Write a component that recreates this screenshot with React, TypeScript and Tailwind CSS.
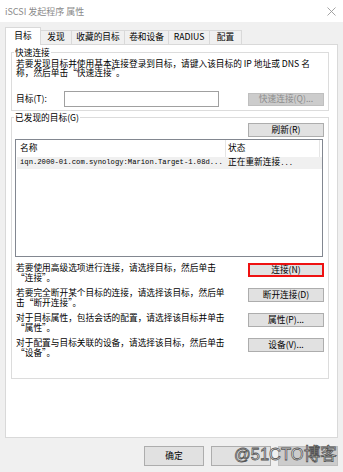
import React from "react";

const tabs = [
  { label: "目标", w: "w-[36px]", active: true },
  { label: "发现", w: "w-[31px]" },
  { label: "收藏的目标", w: "w-[53px]" },
  { label: "卷和设备", w: "w-[44px]" },
  { label: "RADIUS", w: "w-[41px]" },
  { label: "配置", w: "w-[32px]" },
];

const actions = [
  {
    lines: ["若要使用高级选项进行连接，请选择目标，然后单击", "“连接”。"],
    button: "连接(N)",
    highlight: true,
  },
  {
    lines: ["若要完全断开某个目标的连接，请选择该目标，然后单", "击“断开连接”。"],
    button: "断开连接(D)",
  },
  {
    lines: ["对于目标属性，包括会话的配置，请选择该目标并单击", "“属性”。"],
    button: "属性(P)...",
  },
  {
    lines: ["对于配置与目标关联的设备，请选择该目标，然后单击", "“设备”。"],
    button: "设备(V)...",
  },
];

function Btn({
  children,
  className = "",
}: {
  children?: React.ReactNode;
  className?: string;
}) {
  return (
    <div
      className={`flex items-center justify-center border border-[#adadad] bg-[#e1e1e1] text-[8.7px] leading-none text-black ${className}`}
    >
      {children}
    </div>
  );
}

export default function App(): React.ReactElement {
  return (
    <div
      lang="zh-CN"
      className="relative flex h-[472px] w-[343px] flex-col overflow-hidden bg-[#f0f0f0] font-['Noto_Sans_CJK_SC',sans-serif] text-black"
    >
      {/* Title bar */}
      <div className="flex h-[22px] items-center justify-between bg-white pl-[5px] pr-[7px]">
        <span className="text-[9px] leading-none text-[#8a8a8a]">
          iSCSI 发起程序 属性
        </span>
        <svg width="9" height="9" viewBox="0 0 9 9">
          <path d="M0.5 0.5 L8.5 8.5 M8.5 0.5 L0.5 8.5" stroke="#9a9a9a" strokeWidth="0.9" />
        </svg>
      </div>

      {/* Tabs */}
      <div className="mt-[5px] flex h-[17px] items-end px-[5px]">
        {tabs.map((t) =>
          t.active ? (
            <div
              key={t.label}
              className={`relative z-10 -mb-px flex h-[18px] ${t.w} items-start justify-center border-x border-t border-[#d9d9d9] bg-white pt-[2px] text-[8.7px] leading-[12px]`}
            >
              {t.label}
            </div>
          ) : (
            <div
              key={t.label}
              className={`flex h-[14px] ${t.w} items-center justify-center border-r border-t border-[#d9d9d9] bg-[#f0f0f0] text-[8.7px] leading-none`}
            >
              {t.label}
            </div>
          ),
        )}
      </div>

      {/* Tab page */}
      <div className="mx-[5px] flex h-[394px] w-[333px] flex-col border border-[#d9d9d9] bg-white">
        {/* Quick connect */}
        <div className="relative ml-[5px] mt-[7px] h-[59px] w-[318px] border border-[#dcdcdc]">
          <span className="absolute -top-[5px] left-[2px] bg-white px-[1px] text-[8.7px] leading-[9px]">
            快速连接
          </span>
          <p className="whitespace-nowrap pl-[4px] pt-[6px] text-[8.7px] leading-[9px]">
            若要发现目标并使用基本连接登录到目标，请键入该目标的 IP 地址或 DNS 名
            <br />
            称，然后单击“快速连接”。
          </p>
          <div className="mt-[14px] flex h-[16px] items-center pl-[4px]">
            <span className="w-[48px] text-[8.7px] leading-none">目标(T):</span>
            <div className="h-[16px] w-[155px] border border-[#a0a0a0] bg-white" />
            <div className="ml-[29px] flex h-[13px] w-[76px] items-center justify-center border border-[#bfbfbf] bg-[#cccccc] text-[8.7px] leading-none text-[#8c8c8c]">
              快速连接(Q)...
            </div>
          </div>
        </div>

        {/* Discovered targets */}
        <div className="relative ml-[5px] mt-[6px] h-[262px] w-[318px] border border-[#dcdcdc]">
          <span className="absolute -top-[5px] left-[2px] bg-white px-[1px] text-[8.7px] leading-[9px]">
            已发现的目标(G)
          </span>
          <div className="flex justify-end pr-[4px] pt-[5px]">
            <Btn className="h-[14px] w-[76px]">刷新(R)</Btn>
          </div>

          <div className="ml-[3px] mt-[2px] h-[118px] w-[308px] border border-[#828790] bg-white">
            <div className="flex h-[17px] items-center text-[8.7px] leading-none">
              <div className="flex h-full w-[210px] items-center border-r border-[#e5e5e5] pl-[4px]">
                名称
              </div>
              <div className="flex h-full w-[94px] items-center border-r border-[#e5e5e5] pl-[2px]">
                状态
              </div>
            </div>
            <div className="ml-[1px] flex h-[12px] items-center bg-[#f0f0f0]">
              <span className="w-[209px] whitespace-nowrap pl-[3px] font-['Liberation_Mono',monospace] text-[7.2px] leading-none">
                iqn.2000-01.com.synology:Marion.Target-1.08d...
              </span>
              <span className="whitespace-nowrap pl-[2px] text-[8.7px] leading-none">
                正在重新连接
                <span className="font-['Liberation_Mono',monospace] text-[7.2px]">...</span>
              </span>
            </div>
          </div>

          <div className="mt-[6px] flex flex-col">
            {actions.map((a) => (
              <div key={a.button} className="flex h-[25px] items-start justify-between pl-[4px] pr-[4px]">
                <p className="whitespace-nowrap text-[8.7px] leading-[9.5px]">
                  {a.lines[0]}
                  <br />
                  {a.lines[1]}
                </p>
                {a.highlight ? (
                  <Btn className="h-[14px] w-[76px] border-2 border-[#ee1111]">{a.button}</Btn>
                ) : (
                  <Btn className="h-[14px] w-[76px]">{a.button}</Btn>
                )}
              </div>
            ))}
          </div>
        </div>
      </div>

      {/* Dialog buttons (labels of the last two are hidden under the watermark) */}
      <div className="mt-[8px] flex justify-end gap-[7px] pr-[5px]">
        <Btn className="h-[20px] w-[60px]">确定</Btn>
        <Btn className="h-[20px] w-[60px]" />
        <div className="h-[20px] w-[60px] border border-[#bfbfbf] bg-[#cccccc]" />
      </div>

      {/* Watermark */}
      <span className="pointer-events-none absolute left-[234px] top-[444px] whitespace-nowrap font-['Liberation_Sans','Noto_Sans_CJK_SC',sans-serif] text-[16.5px] leading-[20px] text-white [-webkit-text-stroke:0.8px_#555]">
        @51CTO博客
      </span>
    </div>
  );
}
